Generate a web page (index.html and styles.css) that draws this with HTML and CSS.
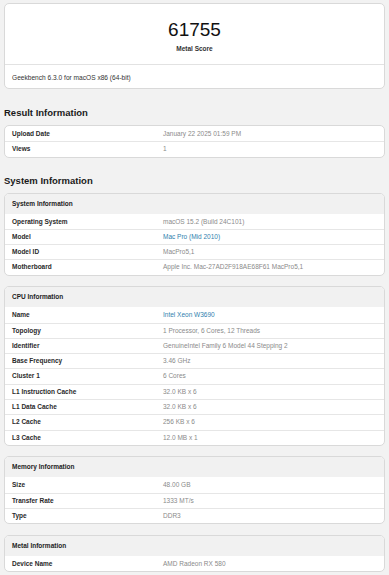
FILE: index.html
```html
<!DOCTYPE html>
<html lang="en">
<head>
    <meta charset="UTF-8">
    <meta name="viewport" content="width=device-width, initial-scale=1.0">
    <title>Geekbench Metal Score</title>
    <link rel="stylesheet" href="styles.css">
</head>
<body>

    <div class="page">

        <!-- Score card -->
        <div class="card score-card">
            <div class="score-top">
                <div class="score">61755</div>
                <div class="score-label">Metal Score</div>
            </div>
            <div class="score-footer">Geekbench 6.3.0 for macOS x86 (64-bit)</div>
        </div>

        <h2 class="section-title first">Result Information</h2>
        <div class="card">
            <div class="row"><span class="name">Upload Date</span><span class="value">January 22 2025 01:59 PM</span></div>
            <div class="row"><span class="name">Views</span><span class="value">1</span></div>
        </div>

        <h2 class="section-title">System Information</h2>
        <div class="card">
            <div class="card-head">System Information</div>
            <div class="row"><span class="name">Operating System</span><span class="value">macOS 15.2 (Build 24C101)</span></div>
            <div class="row"><span class="name">Model</span><span class="value link">Mac Pro (Mid 2010)</span></div>
            <div class="row"><span class="name">Model ID</span><span class="value">MacPro5,1</span></div>
            <div class="row"><span class="name">Motherboard</span><span class="value">Apple Inc. Mac-27AD2F918AE68F61 MacPro5,1</span></div>
        </div>

        <div class="card spaced">
            <div class="card-head">CPU Information</div>
            <div class="row"><span class="name">Name</span><span class="value link">Intel Xeon W3690</span></div>
            <div class="row"><span class="name">Topology</span><span class="value">1 Processor, 6 Cores, 12 Threads</span></div>
            <div class="row"><span class="name">Identifier</span><span class="value">GenuineIntel Family 6 Model 44 Stepping 2</span></div>
            <div class="row"><span class="name">Base Frequency</span><span class="value">3.46 GHz</span></div>
            <div class="row"><span class="name">Cluster 1</span><span class="value">6 Cores</span></div>
            <div class="row"><span class="name">L1 Instruction Cache</span><span class="value">32.0 KB x 6</span></div>
            <div class="row"><span class="name">L1 Data Cache</span><span class="value">32.0 KB x 6</span></div>
            <div class="row"><span class="name">L2 Cache</span><span class="value">256 KB x 6</span></div>
            <div class="row"><span class="name">L3 Cache</span><span class="value">12.0 MB x 1</span></div>
        </div>

        <div class="card spaced">
            <div class="card-head">Memory Information</div>
            <div class="row"><span class="name">Size</span><span class="value">48.00 GB</span></div>
            <div class="row"><span class="name">Transfer Rate</span><span class="value">1333 MT/s</span></div>
            <div class="row"><span class="name">Type</span><span class="value">DDR3</span></div>
        </div>

        <div class="card spaced">
            <div class="card-head">Metal Information</div>
            <div class="row"><span class="name">Device Name</span><span class="value">AMD Radeon RX 580</span></div>
        </div>

    </div>

</body>
</html>
```

FILE: styles.css
```css
body {
    font-family: "Liberation Sans", Arial, sans-serif;
    background-color: #f2f2f2;
    color: #222;
    margin: 0;
    padding: 0;
}
.page {
    padding: 3px 4px 20px;
}
.card {
    background-color: white;
    border: 1px solid #d9d9d9;
    border-radius: 5px;
    overflow: hidden;
}
.card.spaced {
    margin-top: 10.5px;
}
.score-top {
    text-align: center;
    padding: 15px 0 11.5px;
}
.score {
    font-size: 19px;
    line-height: 22px;
    color: #111;
}
.score-label {
    font-size: 6.5px;
    line-height: 9px;
    margin-top: 2.5px;
    font-weight: bold;
    color: #333;
}
.score-footer {
    border-top: 1px solid #e2e2e2;
    font-size: 6.6px;
    line-height: 9px;
    padding: 7.5px 7px 6.5px;
    color: #333;
}
.section-title {
    font-size: 9.5px;
    line-height: 12px;
    font-weight: bold;
    color: #1a1a1a;
    margin: 17px 0 6px;
}
.section-title.first {
    margin-top: 18px;
}
.card-head {
    background-color: #f1f1f1;
    font-size: 6.5px;
    line-height: 20px;
    height: 20px;
    font-weight: bold;
    padding: 0 7px;
    color: #222;
}
.row {
    display: grid;
    grid-template-columns: 151px 1fr;
    font-size: 6.5px;
    line-height: 14.3px;
    padding: 0 7px;
    border-top: 1px solid #e6e6e6;
}
.card > .row:first-child {
    border-top: none;
    line-height: 15.3px;
}
.card-head + .row {
    border-top: none;
    line-height: 15.3px;
}
.name {
    font-weight: bold;
    color: #2a2a2a;
}
.value {
    color: #8a8a8a;
}
.value.link {
    color: #2f7fae;
}
```
